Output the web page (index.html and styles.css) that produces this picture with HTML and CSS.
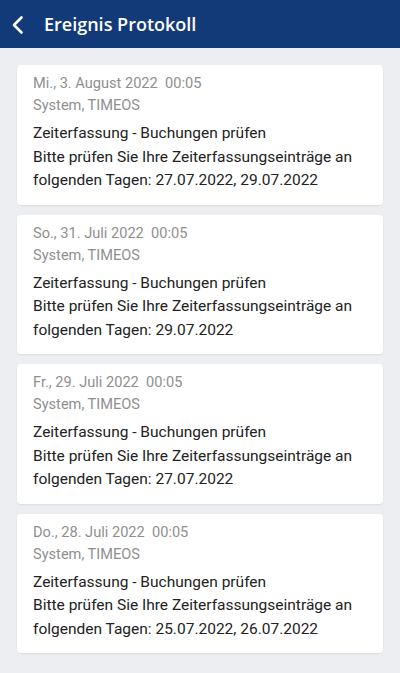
FILE: index.html
```html
<!DOCTYPE html>
<html lang="de">
<head>
    <meta charset="UTF-8">
    <meta name="viewport" content="width=device-width, initial-scale=1.0">
    <title>Ereignis Protokoll</title>
    <link rel="stylesheet" href="styles.css">
</head>
<body>

<header class="app-bar">
    <span class="back-btn">
        <svg width="14" height="20" viewBox="0 0 14 20"><path d="M10.5 2.5 L3 10 L10.5 17.5" fill="none" stroke="#fff" stroke-width="2.6" stroke-linecap="round" stroke-linejoin="round"/></svg>
    </span>
    <h1>Ereignis Protokoll</h1>
</header>

<main class="event-list">
    <!-- Ereignis 1 -->
    <div class="event-card">
        <div class="event-meta">Mi., 3. August 2022&nbsp;&nbsp;00:05</div>
        <div class="event-meta">System, TIMEOS</div>
        <div class="event-body">
            Zeiterfassung - Buchungen prüfen<br>
            Bitte prüfen Sie Ihre Zeiterfassungseinträge an folgenden Tagen: 27.07.2022, 29.07.2022
        </div>
    </div>

    <!-- Ereignis 2 -->
    <div class="event-card">
        <div class="event-meta">So., 31. Juli 2022&nbsp;&nbsp;00:05</div>
        <div class="event-meta">System, TIMEOS</div>
        <div class="event-body">
            Zeiterfassung - Buchungen prüfen<br>
            Bitte prüfen Sie Ihre Zeiterfassungseinträge an folgenden Tagen: 29.07.2022
        </div>
    </div>

    <!-- Ereignis 3 -->
    <div class="event-card">
        <div class="event-meta">Fr., 29. Juli 2022&nbsp;&nbsp;00:05</div>
        <div class="event-meta">System, TIMEOS</div>
        <div class="event-body">
            Zeiterfassung - Buchungen prüfen<br>
            Bitte prüfen Sie Ihre Zeiterfassungseinträge an folgenden Tagen: 27.07.2022
        </div>
    </div>

    <!-- Ereignis 4 -->
    <div class="event-card">
        <div class="event-meta">Do., 28. Juli 2022&nbsp;&nbsp;00:05</div>
        <div class="event-meta">System, TIMEOS</div>
        <div class="event-body">
            Zeiterfassung - Buchungen prüfen<br>
            Bitte prüfen Sie Ihre Zeiterfassungseinträge an folgenden Tagen: 25.07.2022, 26.07.2022
        </div>
    </div>
</main>

</body>
</html>
```

FILE: styles.css
```css
body {
    font-family: Roboto, 'Liberation Sans', sans-serif;
    margin: 0;
    background-color: #eceef2;
}
.app-bar {
    height: 48px;
    background-color: #133a78;
    display: flex;
    align-items: center;
    padding-left: 11px;
    box-sizing: border-box;
}
.back-btn {
    display: flex;
    width: 14px;
    height: 20px;
    margin-top: 1px;
}
.app-bar h1 {
    margin: 0 0 0 19px;
    color: #fff;
    font-family: 'Open Sans', sans-serif;
    font-weight: 600;
    font-size: 18px;
}
.event-list {
    display: flex;
    flex-direction: column;
    gap: 10px;
    padding: 17px 17px 20px;
}
.event-card {
    background-color: #fff;
    border-radius: 4px;
    box-shadow: 0 1px 2px rgba(0, 0, 0, 0.08);
    padding: 7px 16px 12px;
}
.event-meta {
    color: #8f8f8f;
    font-size: 14.6px;
    line-height: 22px;
}
.event-body {
    margin-top: 6px;
    color: #222;
    font-size: 15.5px;
    line-height: 23.5px;
}
```
